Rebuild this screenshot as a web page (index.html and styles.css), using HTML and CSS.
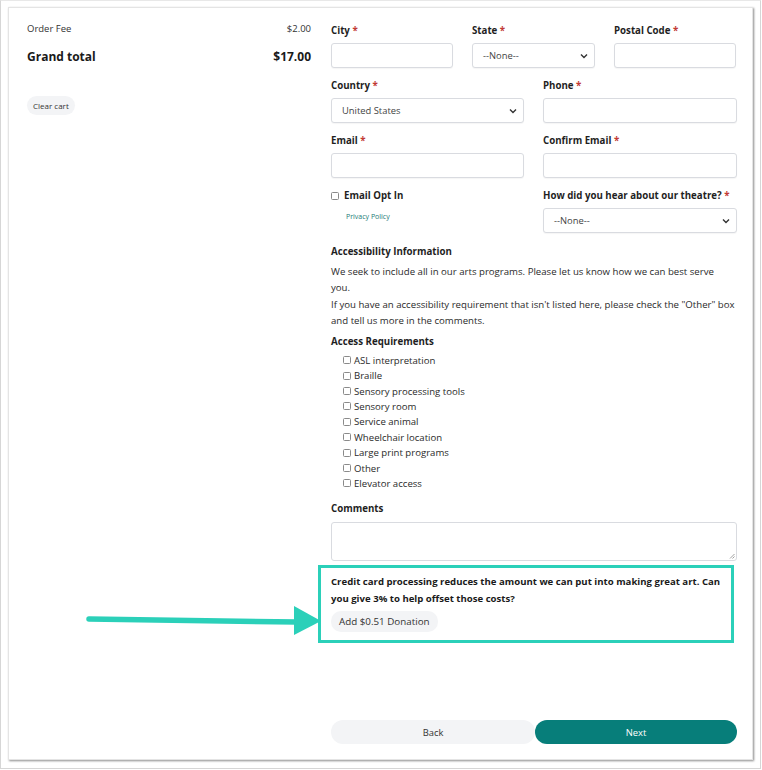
FILE: index.html
```html
<!DOCTYPE html>
<html>
<head>
<meta charset="utf-8">
<link rel="stylesheet" href="styles.css">
</head>
<body>
<div class="frame">
  <div class="panel">
    <div class="summary">
      <div class="fee-row"><span>Order Fee</span><span>$2.00</span></div>
      <div class="total-row"><span>Grand total</span><span>$17.00</span></div>
      <button class="pill clear">Clear cart</button>
    </div>
    <div class="form">
      <div class="row three">
        <div class="field"><label>City <span class="req">*</span></label><div class="input"></div></div>
        <div class="field"><label>State <span class="req">*</span></label><div class="input select"><span>--None--</span><svg width="8" height="6" viewBox="0 0 8 6"><path d="M1 1.5 L4 4.5 L7 1.5" fill="none" stroke="#333" stroke-width="1.4"/></svg></div></div>
        <div class="field"><label>Postal Code <span class="req">*</span></label><div class="input"></div></div>
      </div>
      <div class="row two">
        <div class="field"><label>Country <span class="req">*</span></label><div class="input select"><span>United States</span><svg width="8" height="6" viewBox="0 0 8 6"><path d="M1 1.5 L4 4.5 L7 1.5" fill="none" stroke="#333" stroke-width="1.4"/></svg></div></div>
        <div class="field"><label>Phone <span class="req">*</span></label><div class="input"></div></div>
      </div>
      <div class="row two">
        <div class="field"><label>Email <span class="req">*</span></label><div class="input"></div></div>
        <div class="field"><label>Confirm Email <span class="req">*</span></label><div class="input"></div></div>
      </div>
      <div class="row two">
        <div class="field">
          <label class="opt"><span class="box"></span>Email Opt In</label>
          <a class="privacy">Privacy Policy</a>
        </div>
        <div class="field"><label>How did you hear about our theatre? <span class="req">*</span></label><div class="input select"><span>--None--</span><svg width="8" height="6" viewBox="0 0 8 6"><path d="M1 1.5 L4 4.5 L7 1.5" fill="none" stroke="#333" stroke-width="1.4"/></svg></div></div>
      </div>
      <h4 class="heading access">Accessibility Information</h4>
      <p class="para">We seek to include all in our arts programs. Please let us know how we can best serve<br>you.</p>
      <p class="para">If you have an accessibility requirement that isn't listed here, please check the "Other" box and tell us more in the comments.</p>
      <h4 class="heading req-h">Access Requirements</h4>
      <ul class="checks">
        <li><span class="box"></span>ASL interpretation</li>
        <li><span class="box"></span>Braille</li>
        <li><span class="box"></span>Sensory processing tools</li>
        <li><span class="box"></span>Sensory room</li>
        <li><span class="box"></span>Service animal</li>
        <li><span class="box"></span>Wheelchair location</li>
        <li><span class="box"></span>Large print programs</li>
        <li><span class="box"></span>Other</li>
        <li><span class="box"></span>Elevator access</li>
      </ul>
      <h4 class="heading comments">Comments</h4>
      <div class="textarea"><svg class="grip" width="6" height="6" viewBox="0 0 6 6"><path d="M5.5 1 L1 5.5 M5.5 3.5 L3.5 5.5" stroke="#888" stroke-width="0.8"/></svg></div>
      <div class="donation">
        <div class="highlight"></div>
        <p class="don-text">Credit card processing reduces the amount we can put into making great art. Can you give 3% to help offset those costs?</p>
        <button class="pill donate">Add $0.51 Donation</button>
      </div>
      <div class="nav">
        <button class="back">Back</button>
        <button class="next">Next</button>
      </div>
    </div>
    <svg class="arrow" width="250" height="40" viewBox="0 0 250 40">
      <path d="M10 18 L218 21" stroke="#2bd0b9" stroke-width="5.5" stroke-linecap="round" fill="none"/>
      <path d="M215 5 L242 20 L215 34 Z" fill="#2bd0b9"/>
    </svg>
  </div>
</div>
</body>
</html>
```
FILE: styles.css
```css
* { box-sizing: border-box; }
html, body { margin: 0; padding: 0; background: #fff; }
body {
  font-family: "Open Sans", "Noto Sans", sans-serif;
  color: #222;
  font-size: 9.4px;
}
.frame {
  width: 761px;
  height: 769px;
  margin: 0;
  border: 1px solid #d6d6d6;
  border-top-color: #e8e8e8;
  padding: 6px 0 0 7px;
  background: #fff;
}
.panel {
  position: relative;
  width: 745px;
  height: 753px;
  border: 1px solid #e4e4e4;
  box-shadow: 1px 1px 2px rgba(0,0,0,0.45);
  display: grid;
  grid-template-columns: 284px 406px;
  column-gap: 20px;
  padding: 0 0 0 18px;
}
.summary { padding-top: 14px; }
.fee-row, .total-row { display: flex; justify-content: space-between; }
.fee-row { font-size: 9.5px; line-height: 14px; color: #333; }
.total-row { font-size: 12px; font-weight: 700; line-height: 18px; margin-top: 12px; color: #1a1a1a; }
.pill {
  font-family: inherit;
  border: none;
  background: #f3f4f6;
  border-radius: 10px;
  color: #333;
  cursor: pointer;
}
.clear { margin-top: 30px; font-size: 8px; height: 19px; padding: 0 6px; }

.form { padding: 16px 0 15px; display: flex; flex-direction: column; height: 100%; }
.row { display: grid; column-gap: 19px; margin-bottom: 11px; }
.row.three { grid-template-columns: 122px 123px 122px; }
.row.two { grid-template-columns: 193px 194px; }
label {
  display: block;
  font-weight: 700;
  font-size: 9.7px;
  line-height: 14px;
  margin-bottom: 5px;
  color: #1f1f1f;
}
.req { color: #c23934; }
.input {
  height: 25px;
  border: 1px solid #d9dbe0;
  border-radius: 3px;
  background: #fff;
  box-shadow: 0 1px 1px rgba(0,0,0,0.04);
}
.select {
  display: flex;
  align-items: center;
  justify-content: space-between;
  padding: 0 6px 0 10px;
  font-size: 9.4px;
  color: #444;
}
.opt { display: flex; align-items: center; gap: 5px; margin-bottom: 0; }
.box {
  display: inline-block;
  width: 8px;
  height: 8px;
  border: 1px solid #8a8a8a;
  border-radius: 1.5px;
  background: #fff;
  flex: none;
}
.privacy {
  display: block;
  margin: 9px 0 0 15px;
  font-size: 7px;
  color: #1b7c78;
  line-height: 10px;
}
.heading {
  margin: 0;
  font-size: 9.7px;
  font-weight: 700;
  line-height: 14px;
  color: #1f1f1f;
}
.access { margin-top: 1px; }
.para {
  margin: 0;
  font-size: 9.65px;
  line-height: 16.4px;
  color: #2a2a2a;
}
.access + .para { margin-top: 5px; }
.req-h { margin-top: 5px; }
.checks {
  list-style: none;
  margin: 4px 0 0 0;
  padding: 0 0 0 12px;
}
.checks li {
  display: flex;
  align-items: center;
  gap: 3px;
  height: 15.4px;
  font-size: 9.6px;
  color: #2a2a2a;
}
.comments { margin-top: 11px; }
.textarea {
  position: relative;
  margin-top: 6px;
  height: 39px;
  border: 1px solid #d9dbe0;
  border-radius: 3px;
}
.grip { position: absolute; right: 1px; bottom: 1px; }
.donation {
  position: relative;
  margin-top: 4px;
  padding-top: 8px;
  height: 78px;
}
.highlight {
  position: absolute;
  left: -13px;
  top: 0;
  width: 416px;
  height: 78px;
  border: 3px solid #2bd0b9;
}
.don-text {
  margin: 0;
  font-size: 9.6px;
  font-weight: 700;
  line-height: 17px;
  color: #1a1a1a;
}
.donate { margin-top: 4px; height: 21px; padding: 0 8px; font-size: 9.8px; }
.nav {
  margin-top: auto;
  display: grid;
  grid-template-columns: 204px 202px;
}
.nav button {
  height: 24px;
  border: none;
  border-radius: 12px;
  font-family: inherit;
  font-size: 9.4px;
}
.back { background: #f3f4f6; color: #333; }
.next { background: #077e7a; color: #fff; }
.arrow { position: absolute; left: 70px; top: 593px; }
```
